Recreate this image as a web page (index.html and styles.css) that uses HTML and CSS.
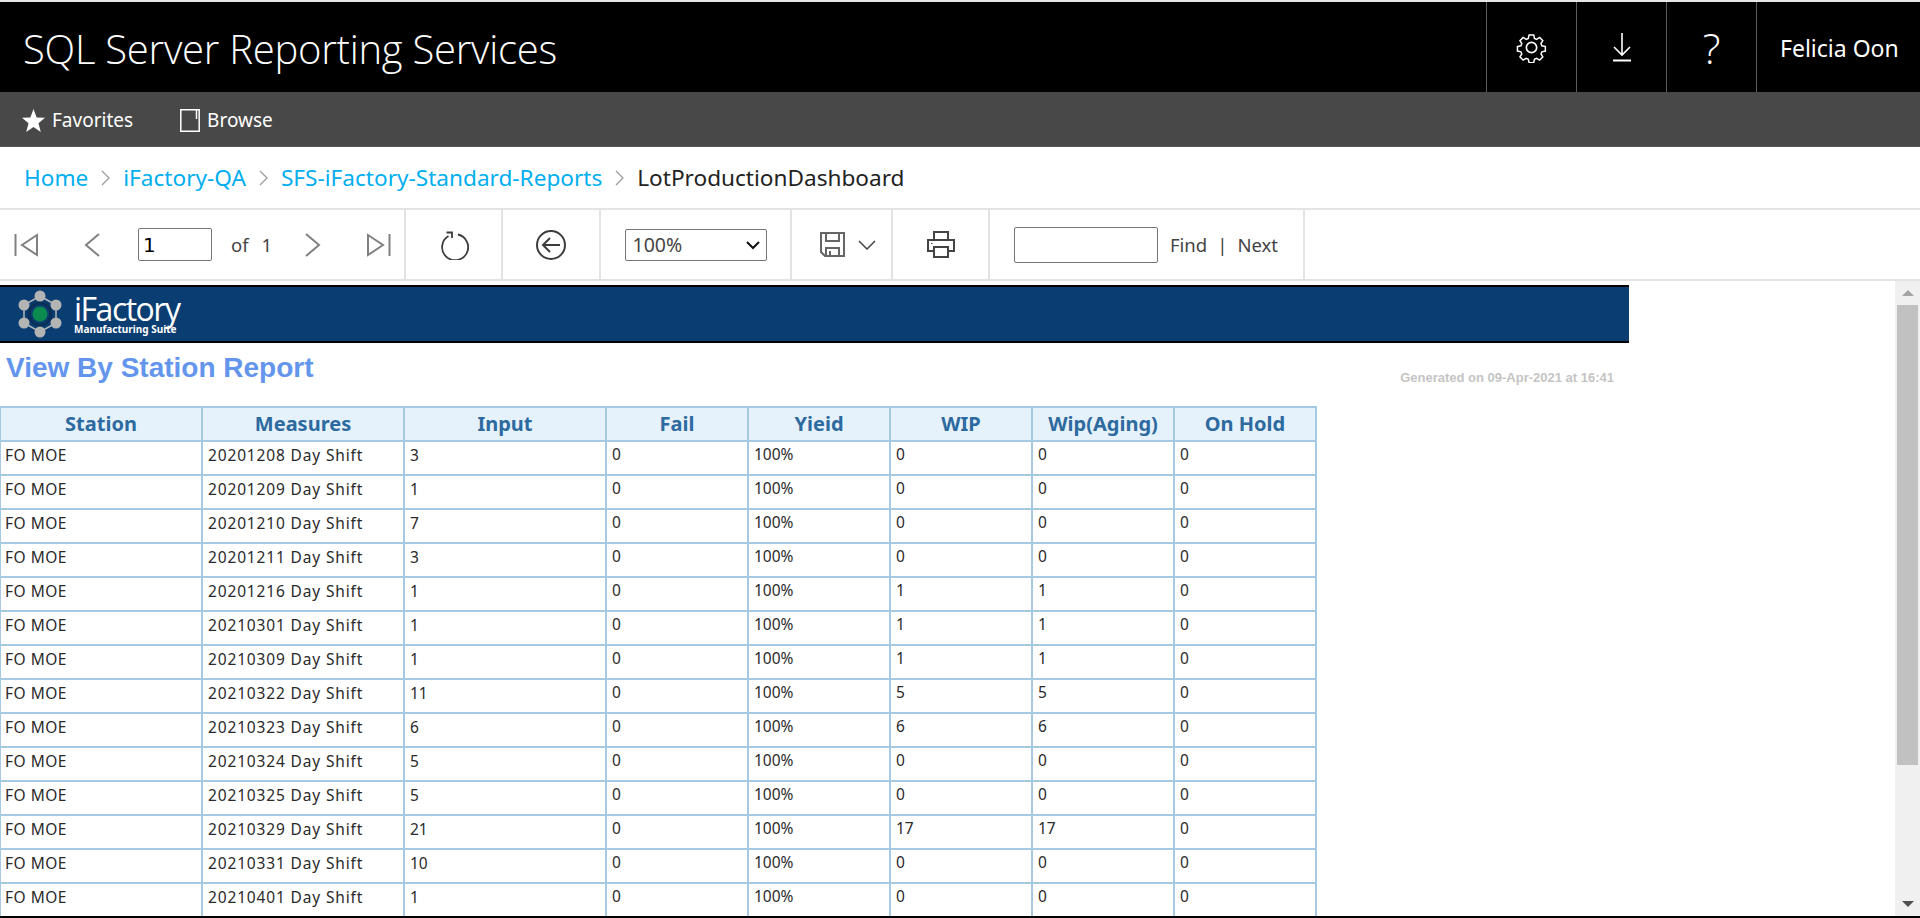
FILE: index.html
```html
<!DOCTYPE html>
<html lang="en">
<head>
    <meta charset="UTF-8">
    <title>LotProductionDashboard - SQL Server Reporting Services</title>
    <link rel="stylesheet" href="styles.css">
</head>
<body>
<div class="page">
    <div class="topbar">
        <div class="brand">SQL Server Reporting Services</div>
        <div class="top-btn">
            <svg width="31" height="31" viewBox="0 0 28 30" fill="none" stroke="#fff" stroke-width="1.6"><path d="M11.500 1.500h5l.8 3.700 2.300 1 3.300-2 3.400 3.500-2 3.200 1 2.300 3.700.8v4.800l-3.700.8-1 2.300 2 3.200-3.400 3.500-3.300-2-2.300 1-.8 3.700h-5l-.8-3.700-2.300-1-3.300 2-3.400-3.500 2-3.200-1-2.300-3.700-.8v-4.800l3.700-.8 1-2.300-2-3.200 3.400-3.500 3.300 2 2.300-1z" transform="translate(1.300 1.500) scale(.9)"/><circle cx="14" cy="15" r="5"/></svg>
        </div>
        <div class="top-btn">
            <svg width="20" height="30" viewBox="0 0 20 30" fill="none" stroke="#fff" stroke-width="1.6"><path d="M10 1v22M2 15l8 8 8-8"/><path d="M1 28.500h18" stroke-width="2"/></svg>
        </div>
        <div class="top-btn help">?</div>
        <div class="top-btn user">Felicia Oon</div>
    </div>
    <div class="navbar">
        <a class="nav-item">
            <svg width="23" height="23" viewBox="0 0 24 24" fill="#fff"><path d="M12 0l3.300 8.800 8.700.4-6.800 5.700 2.400 9.100-7.600-5.200L4.400 24l2.400-9.100L0 9.200l8.700-.4z"/></svg>
            Favorites
        </a>
        <a class="nav-item">
            <svg width="20" height="23" viewBox="0 0 20 23" fill="none" stroke="#fff" stroke-width="1.500"><path d="M.8.800h18.400v21.400H.8z"/><path d="M16.500 1v9"/></svg>
            Browse
        </a>
    </div>
    <div class="crumbs">
        <a>Home</a>
        <svg class="crumb-sep" width="9" height="16" viewBox="0 0 9 16" fill="none" stroke="#999" stroke-width="1.200"><path d="M1 1l7 7-7 7"/></svg>
        <a>iFactory-QA</a>
        <svg class="crumb-sep" width="9" height="16" viewBox="0 0 9 16" fill="none" stroke="#999" stroke-width="1.200"><path d="M1 1l7 7-7 7"/></svg>
        <a>SFS-iFactory-Standard-Reports</a>
        <svg class="crumb-sep" width="9" height="16" viewBox="0 0 9 16" fill="none" stroke="#999" stroke-width="1.200"><path d="M1 1l7 7-7 7"/></svg>
        <span class="crumb-now">LotProductionDashboard</span>
    </div>
    <div class="toolbar">
        <div class="tool-group paging">
            <svg class="ic-first" width="24" height="24" viewBox="0 0 24 24" fill="none" stroke="#808080" stroke-width="2"><path d="M1.500 1v22M23 2v20L8 12z"/></svg>
            <svg class="ic-prev" width="16" height="24" viewBox="0 0 16 24" fill="none" stroke="#808080" stroke-width="2"><path d="M15 1L2 12l13 11"/></svg>
            <input class="page-input" type="text" value="1">
            <span class="page-of">of</span>
            <span class="page-total">1</span>
            <svg class="ic-next" width="16" height="24" viewBox="0 0 16 24" fill="none" stroke="#808080" stroke-width="2"><path d="M1 1l13 11L1 23"/></svg>
            <svg class="ic-last" width="24" height="24" viewBox="0 0 24 24" fill="none" stroke="#808080" stroke-width="2"><path d="M22.500 1v22M1 2v20l15-10z"/></svg>
        </div>
        <div class="tool-group w-refresh">
            <svg width="30" height="30" viewBox="0 0 30 30" fill="none" stroke="#3c3c3c" stroke-width="1.800"><path d="M9.500 6A13 13 0 1 0 19 4.500"/><path d="M7.500 2.500h5.500v5.500"/></svg>
        </div>
        <div class="tool-group w-back">
            <svg width="30" height="30" viewBox="0 0 30 30" fill="none" stroke="#3c3c3c" stroke-width="2"><circle cx="15" cy="15" r="14"/><path d="M24 15H7M14 8l-7 7 7 7"/></svg>
        </div>
        <div class="tool-group w-zoom">
            <div class="zoom-box">
                <select class="zoom-select">
                    <option>100%</option>
                </select>
                <svg class="zoom-arrow" width="14" height="9" viewBox="0 0 14 9" fill="none" stroke="#111" stroke-width="2"><path d="M1 1l6 6 6-6"/></svg>
            </div>
        </div>
        <div class="tool-group w-save">
            <svg width="25" height="25" viewBox="0 0 25 25" fill="none" stroke="#666" stroke-width="2"><path d="M1 1h23v23H5l-4-4z"/><path d="M6 1v8h13V1M6 24v-8h13v8M10 24v-5"/></svg>
            <svg class="save-arrow" width="18" height="10" viewBox="0 0 18 10" fill="none" stroke="#444" stroke-width="1.500"><path d="M1 1l8 8 8-8"/></svg>
        </div>
        <div class="tool-group w-print">
            <svg width="28" height="27" viewBox="0 0 28 27" fill="none" stroke="#444" stroke-width="2"><path d="M7 9V1h14v8M7 20H1V9h26v11h-6"/><path d="M7 16h14v10H7z"/><path d="M4 12.500h1.500" stroke-width="1"/></svg>
        </div>
        <div class="tool-group find">
            <input class="find-input" type="text">
            <span class="find-link">Find</span>
            <span class="find-bar">|</span>
            <span class="find-link">Next</span>
        </div>
    </div>
    <div class="viewer">
        <div class="report">
            <div class="band">
                <svg class="logo-mark" width="46" height="48" viewBox="0 0 46 48">
                    <path d="M23 6L39 15V33L23 42L7 33V15Z" fill="none" stroke="#b5b5b5" stroke-width="1.500"/>
                    <circle cx="23" cy="24" r="11" fill="none" stroke="#0b2f55" stroke-width="3"/>
                    <circle cx="23" cy="24" r="7.500" fill="#0c8a4f"/>
                    <circle cx="23" cy="6" r="5.500" fill="#b4b4b4"/>
                    <circle cx="39" cy="15" r="5.500" fill="#b4b4b4"/>
                    <circle cx="39" cy="33" r="5.500" fill="#b4b4b4"/>
                    <circle cx="23" cy="42" r="5.500" fill="#b4b4b4"/>
                    <circle cx="7" cy="33" r="5.500" fill="#b4b4b4"/>
                    <circle cx="7" cy="15" r="5.500" fill="#b4b4b4"/>
                </svg>
                <div class="logo-text">
                    <div class="logo-name">iFactory</div>
                    <div class="logo-sub">Manufacturing Suite</div>
                </div>
            </div>
            <div class="report-head">
                <div class="report-title">View By Station Report</div>
                <div class="report-date">Generated on 09-Apr-2021 at 16:41</div>
            </div>
            <table class="data">
                <colgroup>
                    <col class="c-wide"><col class="c-wide"><col class="c-wide">
                    <col class="c-num"><col class="c-num"><col class="c-num"><col class="c-num"><col class="c-num">
                </colgroup>
                <thead>
                    <tr><th>Station</th><th>Measures</th><th>Input</th><th>Fail</th><th>Yieid</th><th>WIP</th><th>Wip(Aging)</th><th>On Hold</th></tr>
                </thead>
                <tbody>
                    <tr><td>FO MOE</td><td>20201208 Day Shift</td><td>3</td><td>0</td><td>100%</td><td>0</td><td>0</td><td>0</td></tr>
                    <tr><td>FO MOE</td><td>20201209 Day Shift</td><td>1</td><td>0</td><td>100%</td><td>0</td><td>0</td><td>0</td></tr>
                    <tr><td>FO MOE</td><td>20201210 Day Shift</td><td>7</td><td>0</td><td>100%</td><td>0</td><td>0</td><td>0</td></tr>
                    <tr><td>FO MOE</td><td>20201211 Day Shift</td><td>3</td><td>0</td><td>100%</td><td>0</td><td>0</td><td>0</td></tr>
                    <tr><td>FO MOE</td><td>20201216 Day Shift</td><td>1</td><td>0</td><td>100%</td><td>1</td><td>1</td><td>0</td></tr>
                    <tr><td>FO MOE</td><td>20210301 Day Shift</td><td>1</td><td>0</td><td>100%</td><td>1</td><td>1</td><td>0</td></tr>
                    <tr><td>FO MOE</td><td>20210309 Day Shift</td><td>1</td><td>0</td><td>100%</td><td>1</td><td>1</td><td>0</td></tr>
                    <tr><td>FO MOE</td><td>20210322 Day Shift</td><td>11</td><td>0</td><td>100%</td><td>5</td><td>5</td><td>0</td></tr>
                    <tr><td>FO MOE</td><td>20210323 Day Shift</td><td>6</td><td>0</td><td>100%</td><td>6</td><td>6</td><td>0</td></tr>
                    <tr><td>FO MOE</td><td>20210324 Day Shift</td><td>5</td><td>0</td><td>100%</td><td>0</td><td>0</td><td>0</td></tr>
                    <tr><td>FO MOE</td><td>20210325 Day Shift</td><td>5</td><td>0</td><td>100%</td><td>0</td><td>0</td><td>0</td></tr>
                    <tr><td>FO MOE</td><td>20210329 Day Shift</td><td>21</td><td>0</td><td>100%</td><td>17</td><td>17</td><td>0</td></tr>
                    <tr><td>FO MOE</td><td>20210331 Day Shift</td><td>10</td><td>0</td><td>100%</td><td>0</td><td>0</td><td>0</td></tr>
                    <tr><td>FO MOE</td><td>20210401 Day Shift</td><td>1</td><td>0</td><td>100%</td><td>0</td><td>0</td><td>0</td></tr>
                </tbody>
            </table>
        </div>
        <div class="scroll">
            <div class="scroll-btn"><span class="arrow-up"></span></div>
            <div class="scroll-track"><div class="scroll-thumb"></div></div>
            <div class="scroll-btn"><span class="arrow-down"></span></div>
        </div>
    </div>
</div>
</body>
</html>
```

FILE: styles.css
```css
* {
    margin: 0;
    padding: 0;
    box-sizing: border-box;
}
html, body {
    height: 100%;
    overflow: hidden;
    background: #fff;
    font-family: "Noto Sans", "Open Sans", sans-serif;
}
.page {
    height: 918px;
    display: flex;
    flex-direction: column;
    border-top: 2px solid #e6e6e6;
    border-bottom: 2px solid #000;
}

/* top black bar */
.topbar {
    height: 90px;
    background: #000;
    display: flex;
    align-items: stretch;
    color: #fff;
}
.brand {
    flex: 1;
    padding-left: 23px;
    font-size: 40px;
    font-weight: 300;
    font-family: "Open Sans", "Noto Sans", sans-serif;
    line-height: 94px;
    letter-spacing: -.25px;
}
.top-btn {
    width: 90px;
    border-left: 1px solid #5a5a5a;
    display: flex;
    align-items: center;
    justify-content: center;
}
.help {
    font-size: 42px;
    font-weight: 300;
    font-family: "Open Sans", sans-serif;
}
.user {
    width: 164px;
    font-size: 23px;
    justify-content: flex-start;
    padding: 2px 0 0 23px;
}

.navbar {
    height: 55px;
    background: #484848;
    display: flex;
    align-items: center;
    padding: 2px 0 0 22px;
    color: #fff;
    font-size: 19px;
    border-bottom: 1px solid #555;
}
.nav-item {
    display: flex;
    align-items: center;
    gap: 7px;
    margin-right: 47px;
}

.crumbs {
    height: 63px;
    display: flex;
    align-items: center;
    padding-left: 24px;
    font-size: 22.6px;
    color: #00aeef;
    border-bottom: 2px solid #e3e3e3;
}
.crumb-sep {
    margin: 0 13px;
}
.crumb-now {
    color: #222;
}

/* report toolbar */
.toolbar {
    height: 71px;
    display: flex;
    border-bottom: 2px solid #e3e3e3;
    color: #444;
    font-size: 18.5px;
}
.tool-group {
    display: flex;
    align-items: center;
    justify-content: center;
    border-right: 2px solid #e3e3e3;
}
.paging {
    width: 406px;
    justify-content: flex-start;
    padding-left: 14px;
}
.ic-prev { margin-left: 46px; }
.page-input {
    width: 74px;
    height: 33px;
    margin-left: 38px;
    border: 1px solid #767676;
    border-radius: 2px;
    padding-left: 4px;
    font-size: 20px;
    font-family: "DejaVu Sans", sans-serif;
    color: #000;
}
.page-of { margin-left: 19px; }
.page-total { margin-left: 13px; }
.ic-next { margin-left: 33px; }
.ic-last { margin-left: 46px; }
.w-refresh { width: 97px; }
.w-back { width: 98px; }
.w-zoom { width: 191px; }
.w-save { width: 101px; padding-left: 13px; }
.w-print { width: 97px; }
.save-arrow { margin-left: 13px; }
.zoom-box {
    position: relative;
    width: 142px;
    height: 32px;
}
.zoom-select {
    appearance: none;
    width: 100%;
    height: 100%;
    background: #fff;
    border: 1px solid #767676;
    border-radius: 2px;
    padding-left: 7px;
    font-size: 19.5px;
    font-family: "Noto Sans", sans-serif;
    color: #444;
}
.zoom-arrow {
    position: absolute;
    right: 7px;
    top: 12px;
}
.find {
    width: 315px;
    justify-content: flex-start;
    padding-left: 24px;
}
.find-input {
    width: 144px;
    height: 36px;
    border: 1px solid #767676;
    border-radius: 2px;
    margin-right: 12px;
}
.find-bar {
    margin: 0 10px;
}

/* report area */
.viewer {
    flex: 1;
    min-height: 0;
    display: flex;
    overflow: hidden;
}
.report {
    flex: 1;
    min-width: 0;
    overflow: hidden;
    padding-top: 4px;
}
.band {
    width: 1629px;
    height: 58px;
    background: #0a3d72;
    border-top: 2px solid #000;
    border-bottom: 2px solid #000;
    display: flex;
    align-items: center;
    padding-left: 17px;
    color: #fff;
}
.logo-name {
    font-family: "Open Sans", sans-serif;
    font-size: 32px;
    line-height: 30px;
    letter-spacing: -1.5px;
}
.logo-sub {
    font-size: 10px;
    font-weight: 700;
    line-height: 10px;
}
.logo-text {
    margin-left: 11px;
}
.report-head {
    width: 1629px;
    height: 63px;
    display: flex;
    justify-content: space-between;
    padding: 9px 15px 0 6px;
}
.report-title {
    font-family: "Liberation Sans", Arial, sans-serif;
    font-weight: 700;
    font-size: 28px;
    color: #6495ed;
}
.report-date {
    font-family: "Liberation Sans", Arial, sans-serif;
    font-weight: 700;
    font-size: 13px;
    color: #c4c4c4;
    padding-top: 18px;
}
table.data {
    width: 1318px;
    margin-left: -1px;
    table-layout: fixed;
    border-collapse: collapse;
    font-family: "Noto Sans", Tahoma, sans-serif;
}
.c-wide { width: 202px; }
.c-num { width: 142px; }
.data th, .data td {
    border: 2px solid #a5c9e1;
    height: 34px;
    overflow: hidden;
    white-space: nowrap;
}
.data th {
    background: #e6f2fb;
    color: #2d6a9f;
    font-size: 20px;
    font-weight: 700;
    line-height: 28px;
    text-align: center;
}
.data td {
    font-size: 15.5px;
    line-height: 20px;
    color: #2a2a2a;
    padding: 3px 0 0 5px;
    vertical-align: top;
}
.data td:first-child {
    letter-spacing: .5px;
    padding-left: 4px;
}
.data td:nth-child(2) {
    letter-spacing: .85px;
}
.data td:nth-child(n+4) {
    padding-top: 2px;
}

/* fake scrollbar of the report frame */
.scroll {
    width: 25px;
    background: #f0f0f0;
    display: flex;
    flex-direction: column;
}
.scroll-btn {
    height: 24px;
    display: flex;
    align-items: center;
    justify-content: center;
}
.scroll-track {
    flex: 1;
    padding: 0 2px;
}
.scroll-thumb {
    height: 460px;
    background: #c1c1c1;
}
.arrow-up {
    border: 6px solid transparent;
    border-top: 0;
    border-bottom: 6px solid #a3a3a3;
}
.arrow-down {
    border: 6px solid transparent;
    border-bottom: 0;
    border-top: 6px solid #505050;
}
```
